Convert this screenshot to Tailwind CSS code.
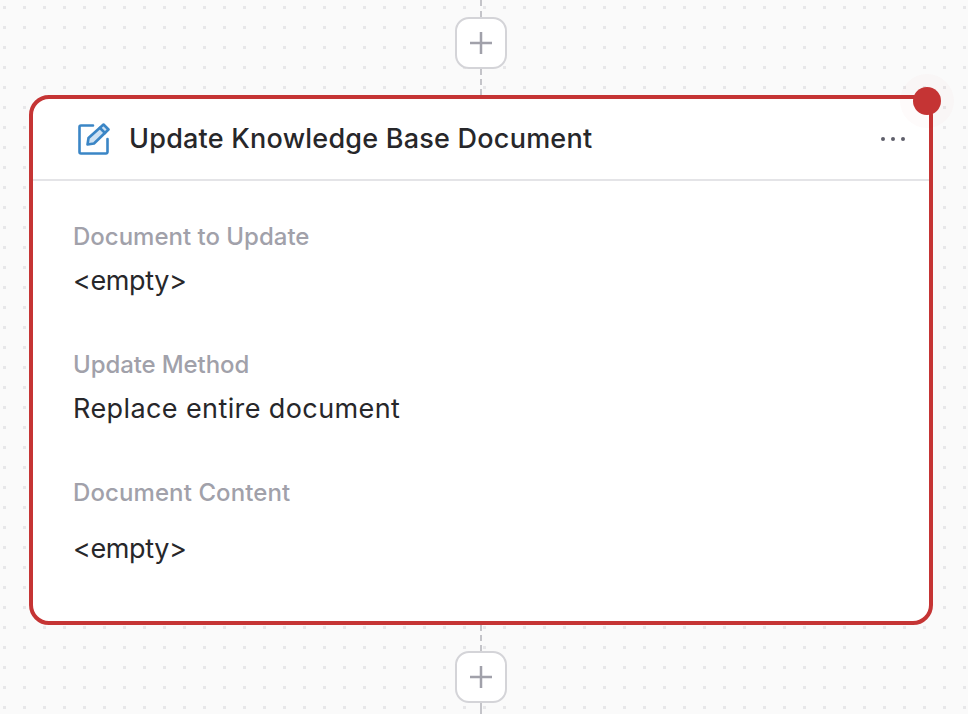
<!DOCTYPE html>
<html lang="en">
<head>
  <meta charset="UTF-8">
  <title>Update Knowledge Base Document</title>
  <script src="https://cdn.jsdelivr.net/npm/@tailwindcss/browser@4"></script>
</head>
<body class="bg-[#fafafa] font-['Inter','Liberation_Sans',sans-serif]">
  <!-- Canvas -->
  <main class="h-[714px] w-[968px] overflow-hidden flex flex-col items-center pr-[6px] bg-[radial-gradient(circle_at_4.5px_7.5px,#e7e7e9_1.6px,transparent_2px)] bg-[size:20px_20px]">
    <!-- Top connector -->
    <div class="w-[904px] flex flex-col items-center">
      <div class="h-[17px] border-l-2 border-dashed border-[#c4c4c9]"></div>
      <button class="w-[52px] h-[52px] rounded-[14px] border-2 border-[#d4d4d8] bg-white flex items-center justify-center">
        <svg class="w-6 h-6 text-[#a1a1aa]" viewBox="0 0 24 24" fill="none" stroke="currentColor" stroke-width="2.5"><path d="M12 1v22M1 12h22"/></svg>
      </button>
      <div class="h-[26px] border-l-2 border-dashed border-[#c4c4c9]"></div>
    </div>

    <!-- Node card -->
    <section class="relative w-[904px] h-[530px] shrink-0 rounded-[20px] border-4 border-[#c53434] bg-white">
      <header class="h-[82px] flex items-center pl-[45px] pr-[24px] border-b-2 border-[#e4e4e7]">
        <svg class="w-8 h-8 shrink-0 text-[#3b86c6]" viewBox="0 0 32 32" fill="none" stroke="currentColor" stroke-width="2.6" stroke-linejoin="round" stroke-linecap="round">
          <path d="M15 2.500H3a1.500 1.500 0 0 0-1.500 1.500v25a1.500 1.500 0 0 0 1.500 1.500h25a1.500 1.500 0 0 0 1.500-1.500V16"/>
          <path fill="#cfe2f3" d="M25.500 1.500 30.500 6.500 16 20.500l-6.500 1 1-6.500z"/>
          <path d="M22 5l5 5"/>
        </svg>
        <h1 class="ml-[19px] text-[27px] leading-8 font-medium text-[#27272a] tracking-[0.23px]">Update Knowledge Base Document</h1>
        <div class="ml-auto flex gap-[6px]">
          <span class="w-[4px] h-[4px] rounded-full bg-[#5f5f6b]"></span>
          <span class="w-[4px] h-[4px] rounded-full bg-[#5f5f6b]"></span>
          <span class="w-[4px] h-[4px] rounded-full bg-[#5f5f6b]"></span>
        </div>
      </header>

      <div class="pl-[40px] pt-[42px]">
        <p class="text-[24px] leading-7 font-medium text-[#a1a1aa]">Document to Update</p>
        <p class="mt-[14px] text-[27px] leading-8 text-[#27272a] tracking-[-0.4px]">&lt;empty&gt;</p>
        <p class="mt-[54px] text-[24px] leading-7 font-medium text-[#a1a1aa] tracking-[-0.1px]">Update Method</p>
        <p class="mt-[14px] text-[27px] leading-8 text-[#27272a] tracking-[0.4px]">Replace entire document</p>
        <p class="mt-[54px] text-[24px] leading-7 font-medium text-[#a1a1aa] tracking-[0.1px]">Document Content</p>
        <p class="mt-[26px] text-[27px] leading-8 text-[#27272a] tracking-[-0.4px]">&lt;empty&gt;</p>
      </div>

      <!-- Error badge -->
      <span class="absolute -top-[12px] -right-[12px] w-[28px] h-[28px] rounded-full bg-[#c53434] shadow-[0_0_0_13px_rgba(197,52,52,0.02)]"></span>
    </section>

    <!-- Bottom connector -->
    <div class="w-[904px] flex flex-col items-center">
      <div class="h-[26px] border-l-2 border-dashed border-[#c4c4c9]"></div>
      <button class="w-[52px] h-[52px] rounded-[14px] border-2 border-[#d4d4d8] bg-white flex items-center justify-center">
        <svg class="w-6 h-6 text-[#a1a1aa]" viewBox="0 0 24 24" fill="none" stroke="currentColor" stroke-width="2.5"><path d="M12 1v22M1 12h22"/></svg>
      </button>
      <div class="h-[11px] border-l-2 border-dashed border-[#c4c4c9]"></div>
    </div>
  </main>
</body>
</html>
